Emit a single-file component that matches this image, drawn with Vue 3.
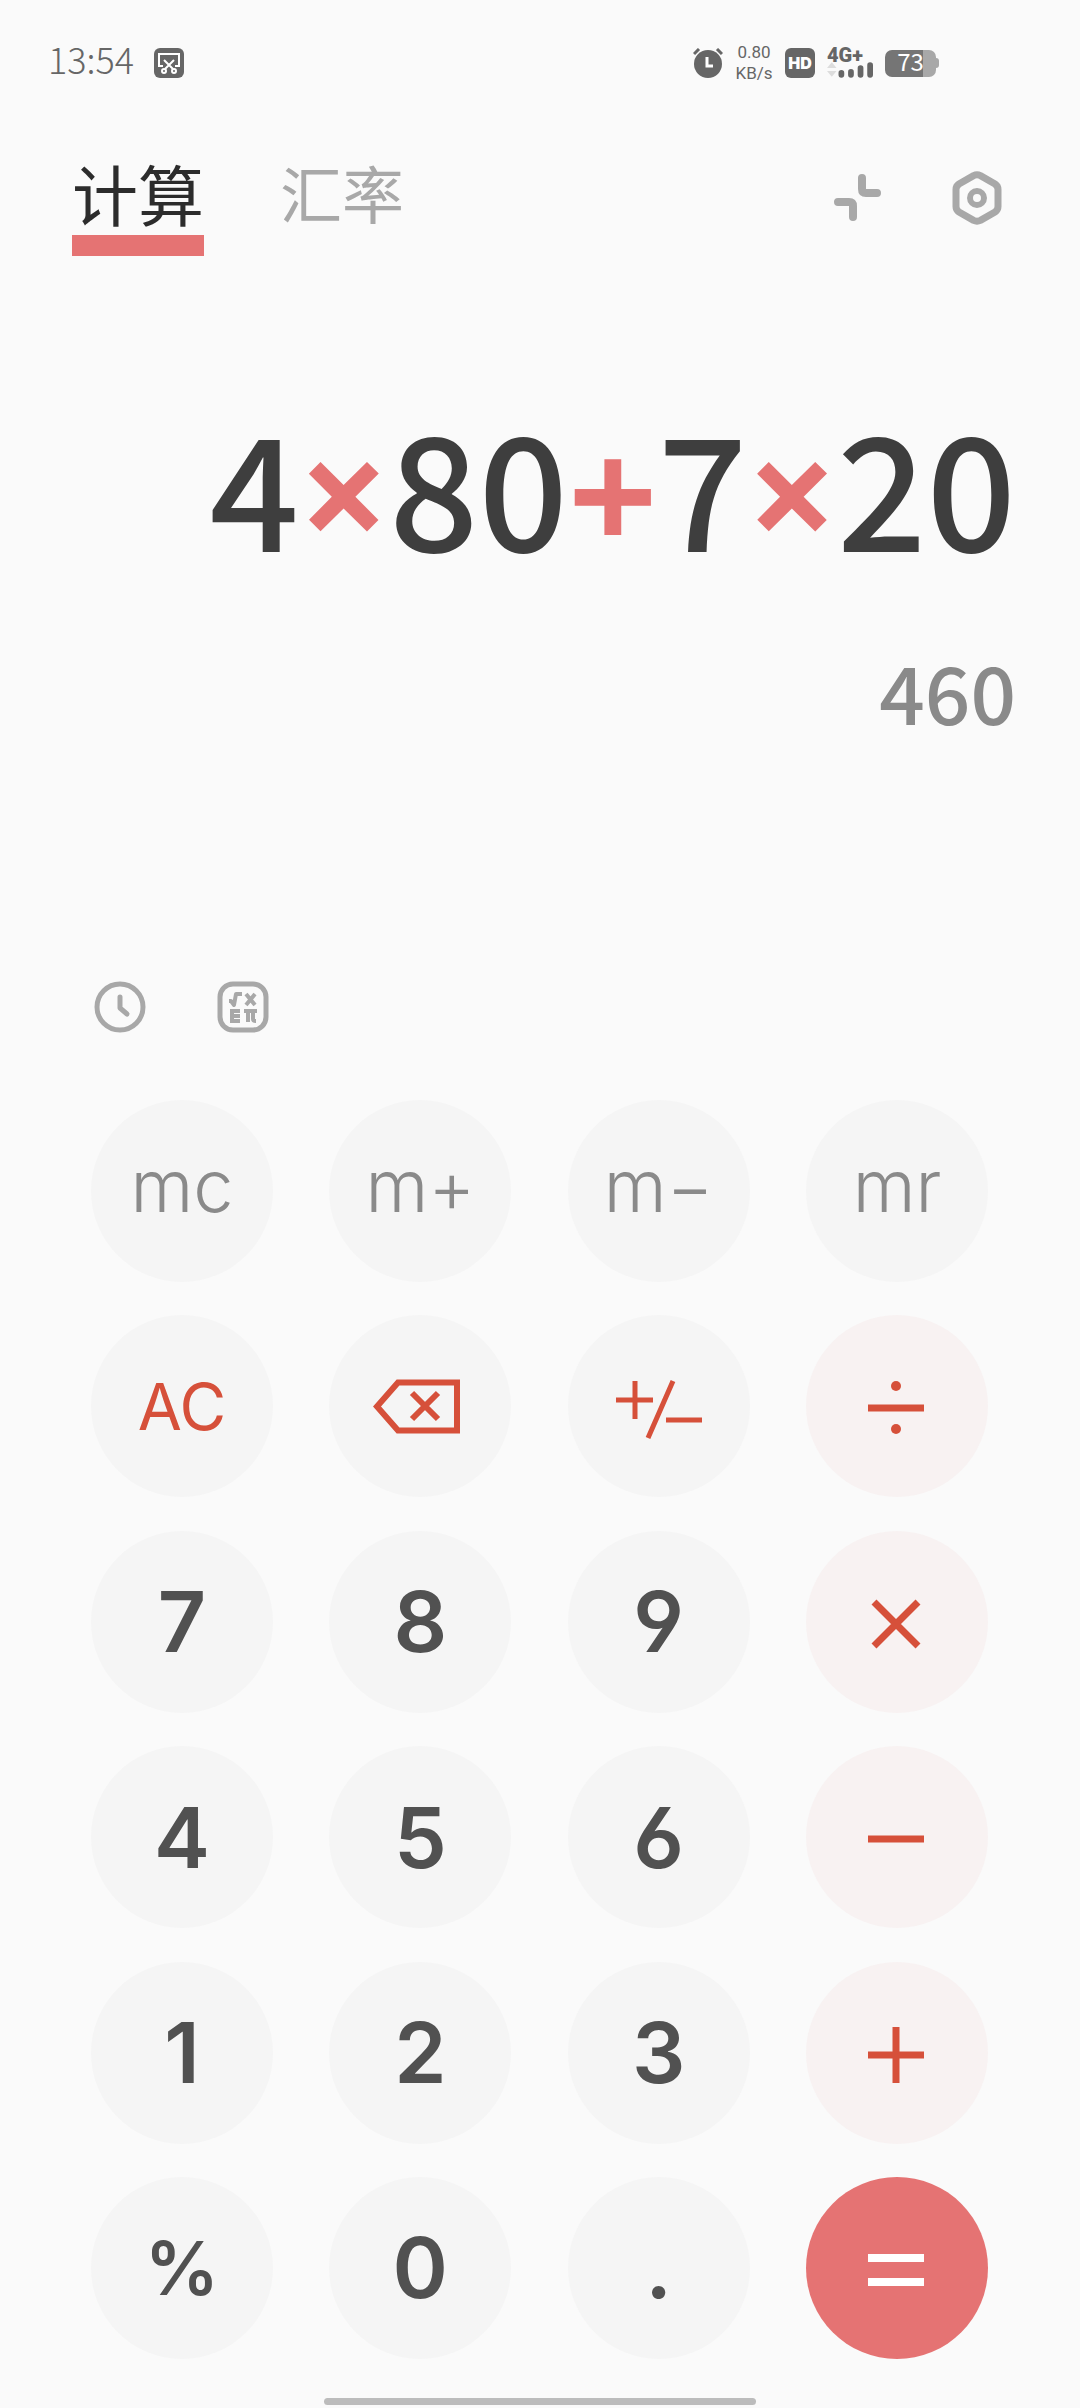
<script setup>
import { ref } from 'vue'

const tabs = [
  { id: 'calc', label: '计算' },
  { id: 'rate', label: '汇率' },
]
const activeTab = ref('calc')

const expression = ['4', '×', '80', '+', '7', '×', '20']
const result = '460'
const isOperator = (token) => '+−×÷'.includes(token)

const keys = [
  { label: 'mc', kind: 'memory' },
  { label: 'm+', kind: 'memory' },
  { label: 'm−', kind: 'memory' },
  { label: 'mr', kind: 'memory' },
  { label: 'AC', kind: 'clear' },
  { icon: 'back', name: '退格', kind: 'clear' },
  { icon: 'sign', name: '正负号', kind: 'clear' },
  { icon: 'divide', name: '除', kind: 'operator' },
  { label: '7', kind: 'digit' },
  { label: '8', kind: 'digit' },
  { label: '9', kind: 'digit' },
  { icon: 'times', name: '乘', kind: 'operator' },
  { label: '4', kind: 'digit' },
  { label: '5', kind: 'digit' },
  { label: '6', kind: 'digit' },
  { icon: 'minus', name: '减', kind: 'operator' },
  { label: '1', kind: 'digit' },
  { label: '2', kind: 'digit' },
  { label: '3', kind: 'digit' },
  { icon: 'plus', name: '加', kind: 'operator' },
  { label: '%', kind: 'percent' },
  { label: '0', kind: 'digit' },
  { label: '.', kind: 'digit' },
  { icon: 'equals', name: '等于', kind: 'equals' },
]

// Stroke paths on a 96 x 96 canvas centred in the key.
const icons = {
  back: { width: 6, d: 'M26 24.500H85V72.500H26L5 48.500ZM40 35L66 61M66 35L40 61' },
  sign: { width: 5, d: 'M5 42H42M24 23V61M62 23L37 80M55 62H91' },
  divide: { width: 7, d: 'M19 50H75' },
  times: { width: 7, d: 'M25 28L69 72M69 28L25 72' },
  minus: { width: 7, d: 'M19 50H75' },
  plus: { width: 7, d: 'M19 50H75M47 22V78' },
  equals: { width: 8, d: 'M19 38H75M19 62H75' },
}
</script>

<template>
  <div class="app">
    <div class="status">
      <div class="status-group">
        <time class="clock">13:54</time>
        <svg class="capture" viewBox="0 0 30 30" width="30" height="30" aria-hidden="true">
          <rect width="30" height="30" rx="6" fill="#666" />
          <g fill="none" stroke="#fff" stroke-width="2">
            <path d="M9 18H5V6H25V18H21" />
            <path d="M10 12L19 21M20 12L11 21" />
            <circle cx="10" cy="23" r="2" />
            <circle cx="20" cy="23" r="2" />
          </g>
        </svg>
      </div>
      <div class="status-group indicators">
        <svg viewBox="0 0 30 30" width="30" height="30" aria-hidden="true">
          <circle cx="15" cy="16" r="14" fill="#666" />
          <path d="M1 6L6 1M29 6L24 1" stroke="#666" stroke-width="3" />
          <path d="M14 9V18H20" fill="none" stroke="#fff" stroke-width="3" />
        </svg>
        <div class="speed"><span>0.80</span><span>KB/s</span></div>
        <span class="hd">HD</span>
        <div class="signal">
          <span class="network">4G+</span>
          <svg viewBox="0 0 48 17" width="46" height="17" aria-hidden="true">
            <path d="M0 6L5 0L10 6ZM0 9H10L5 15Z" fill="#ddd" />
            <path d="M15 11V13M25 10V13M35 6V13M45 3V13" stroke="#666" stroke-width="6" stroke-linecap="round" />
          </svg>
        </div>
        <div class="battery"><span class="battery-body">73</span><span class="battery-tip"></span></div>
      </div>
    </div>

    <header class="header">
      <nav class="tabs">
        <button
          v-for="tab in tabs"
          :key="tab.id"
          type="button"
          class="tab"
          :class="{ active: tab.id === activeTab }"
          @click="activeTab = tab.id"
        >{{ tab.label }}</button>
      </nav>
      <div class="actions">
        <button type="button" class="icon-button" aria-label="缩小">
          <svg viewBox="0 0 54 54" width="54" height="54" fill="none" stroke="#a8a8a8" stroke-width="8" stroke-linecap="round">
            <path d="M31 7V18Q31 22 35 22H46M7 31H18Q22 31 22 35V46" />
          </svg>
        </button>
        <button type="button" class="icon-button" aria-label="设置">
          <svg viewBox="0 0 54 54" width="54" height="54" fill="none" stroke="#a8a8a8">
            <path d="M23.500 4.600Q27 3 30.500 4.600L45 13Q48 15 48 18.500V35.500Q48 39 45 41L30.500 49.400Q27 51 23.500 49.400L9 41Q6 39 6 35.500V18.500Q6 15 9 13Z" stroke-width="7" />
            <circle cx="27" cy="27" r="7" stroke-width="6" />
          </svg>
        </button>
      </div>
    </header>

    <main class="main">
      <section class="display">
        <div class="expression">
          <span v-for="(token, i) in expression" :key="i" :class="{ sign: isOperator(token) }">{{ token }}</span>
        </div>
        <output class="result">{{ result }}</output>
      </section>

      <div class="tools">
        <button type="button" class="icon-button" aria-label="历史记录">
          <svg viewBox="0 0 52 52" width="52" height="52" fill="none" stroke="#a8a8a8">
            <circle cx="26" cy="26" r="23" stroke-width="5" />
            <path d="M26 16V27L33 33" stroke-width="5" stroke-linecap="round" stroke-linejoin="round" />
          </svg>
        </button>
        <button type="button" class="icon-button" aria-label="科学计算">
          <svg viewBox="0 0 52 52" width="52" height="52" fill="none" stroke="#a8a8a8">
            <rect x="3" y="3" width="46" height="46" rx="13" stroke-width="5" />
            <g stroke-width="4">
              <path d="M12 20H14L17 24L19 13H25" stroke-linejoin="round" />
              <path d="M29 13L38 24M38 13L29 24" />
              <path d="M23 30H15V40H23M15 35H23M27 30H40M31 30V41M36 30V38Q36 40 39 40" />
            </g>
          </svg>
        </button>
      </div>

      <div class="keypad">
        <button
          v-for="key in keys"
          :key="key.label || key.icon"
          type="button"
          class="key"
          :class="key.kind"
          :aria-label="key.name"
        >
          <svg v-if="key.icon" viewBox="0 0 96 96" width="96" height="96" aria-hidden="true">
            <path :d="icons[key.icon].d" :stroke-width="icons[key.icon].width" fill="none" stroke="currentColor" />
            <g v-if="key.icon === 'divide'" fill="currentColor">
              <circle cx="47" cy="28" r="5" />
              <circle cx="47" cy="71" r="5" />
            </g>
          </svg>
          <template v-else>{{ key.label }}</template>
        </button>
      </div>
    </main>

    <div class="home-bar"></div>
  </div>
</template>

<style>
body {
  background: #fafafa;
}
</style>

<style scoped>
.app {
  min-height: 100vh;
  box-sizing: border-box;
  padding-bottom: 3px;
  display: flex;
  flex-direction: column;
  background: #fafafa;
  font-family: "Noto Sans CJK SC", "Noto Sans", sans-serif;
  color: #3e3e3e;
}

button {
  border: 0;
  padding: 0;
  margin: 0;
  background: none;
  font-family: inherit;
  cursor: pointer;
}

svg {
  display: block;
}

.status {
  height: 126px;
  padding: 0 141px 0 48px;
  display: flex;
  align-items: center;
  justify-content: space-between;
  color: #666;
}

.status-group {
  display: flex;
  align-items: center;
  gap: 20px;
}

.indicators {
  gap: 12px;
}

.clock {
  font-size: 36px;
  line-height: 36px;
  font-weight: 300;
  padding-bottom: 10px;
}

.speed {
  width: 32px;
  margin: 0 3px;
  display: flex;
  flex-direction: column;
  align-items: center;
  font: 400 17px/21px Roboto, sans-serif;
}

.hd {
  width: 30px;
  height: 30px;
  border-radius: 6px;
  background: #666;
  color: #fff;
  font: 900 16px/30px Inter, sans-serif;
  text-align: center;
}

.signal {
  width: 46px;
  display: flex;
  flex-direction: column;
}

.network {
  font: 900 20px/14px Roboto, sans-serif;
}

.battery {
  display: flex;
  align-items: center;
}

.battery-body {
  width: 51px;
  height: 27px;
  border-radius: 7px;
  background: linear-gradient(90deg, #757575 74%, #a8a8a8 74%);
  color: #fff;
  font-size: 24px;
  line-height: 22px;
  text-align: center;
}

.battery-tip {
  width: 3px;
  height: 10px;
  border-radius: 0 3px 3px 0;
  background: #a8a8a8;
}

.header {
  padding: 29px 76px 0 72px;
  display: flex;
  justify-content: space-between;
  align-items: flex-start;
}

.tabs {
  display: flex;
  gap: 76px;
}

.tab {
  font-size: 62px;
  line-height: 74px;
  height: 101px;
  display: flex;
  font-weight: 400;
  color: #a8a8a8;
}

.tab.active {
  box-sizing: border-box;
  border-bottom: 21px solid #e57373;
  font-size: 66px;
  color: #2c2c2c;
}

.actions {
  height: 86px;
  display: flex;
  align-items: center;
  gap: 65px;
}

.main {
  flex: 1;
  display: flex;
  flex-direction: column;
}

.display {
  padding: 128px 64px 0;
  display: flex;
  flex-direction: column;
  align-items: flex-end;
  gap: 56px;
  font-weight: 500;
}

.expression {
  display: flex;
  align-items: baseline;
  font-size: 157px;
  line-height: 200px;
}

.sign {
  font-family: "Noto Sans", sans-serif;
  font-weight: 700;
  line-height: 160px;
  color: #e57373;
}

.result {
  font-size: 80px;
  line-height: 100px;
  color: #8a8a8a;
}

.tools {
  margin-top: 241px;
  padding: 0 94px;
  display: flex;
  gap: 71px;
}

.keypad {
  flex: 1;
  margin-top: 67px;
  padding: 0 92px 0 91px;
  display: grid;
  grid-template-columns: repeat(4, 182px);
  justify-content: space-between;
  align-content: space-between;
  row-gap: 33px;
}

.key {
  height: 182px;
  box-sizing: border-box;
  border-radius: 50%;
  display: flex;
  align-items: center;
  justify-content: center;
  background: #f5f5f5;
  font-family: Inter, sans-serif;
  color: #515151;
}

.memory {
  font-size: 72px;
  font-weight: 300;
  color: #8a8a8a;
  padding-bottom: 12px;
}

.clear {
  font-size: 64px;
  color: #d6503a;
}

.digit {
  font-size: 84px;
  font-weight: 600;
  font-feature-settings: "cv03", "cv04", "ss03";
}

.percent {
  font-size: 74px;
  font-weight: 600;
}

.operator {
  background: #f8f2f2;
  color: #d6503a;
}

.equals {
  background: #e57373;
  color: #fff;
}

.home-bar {
  width: 40%;
  height: 7px;
  margin: 39px auto 0;
  border-radius: 4px;
  background: #bcbcbc;
}
</style>
